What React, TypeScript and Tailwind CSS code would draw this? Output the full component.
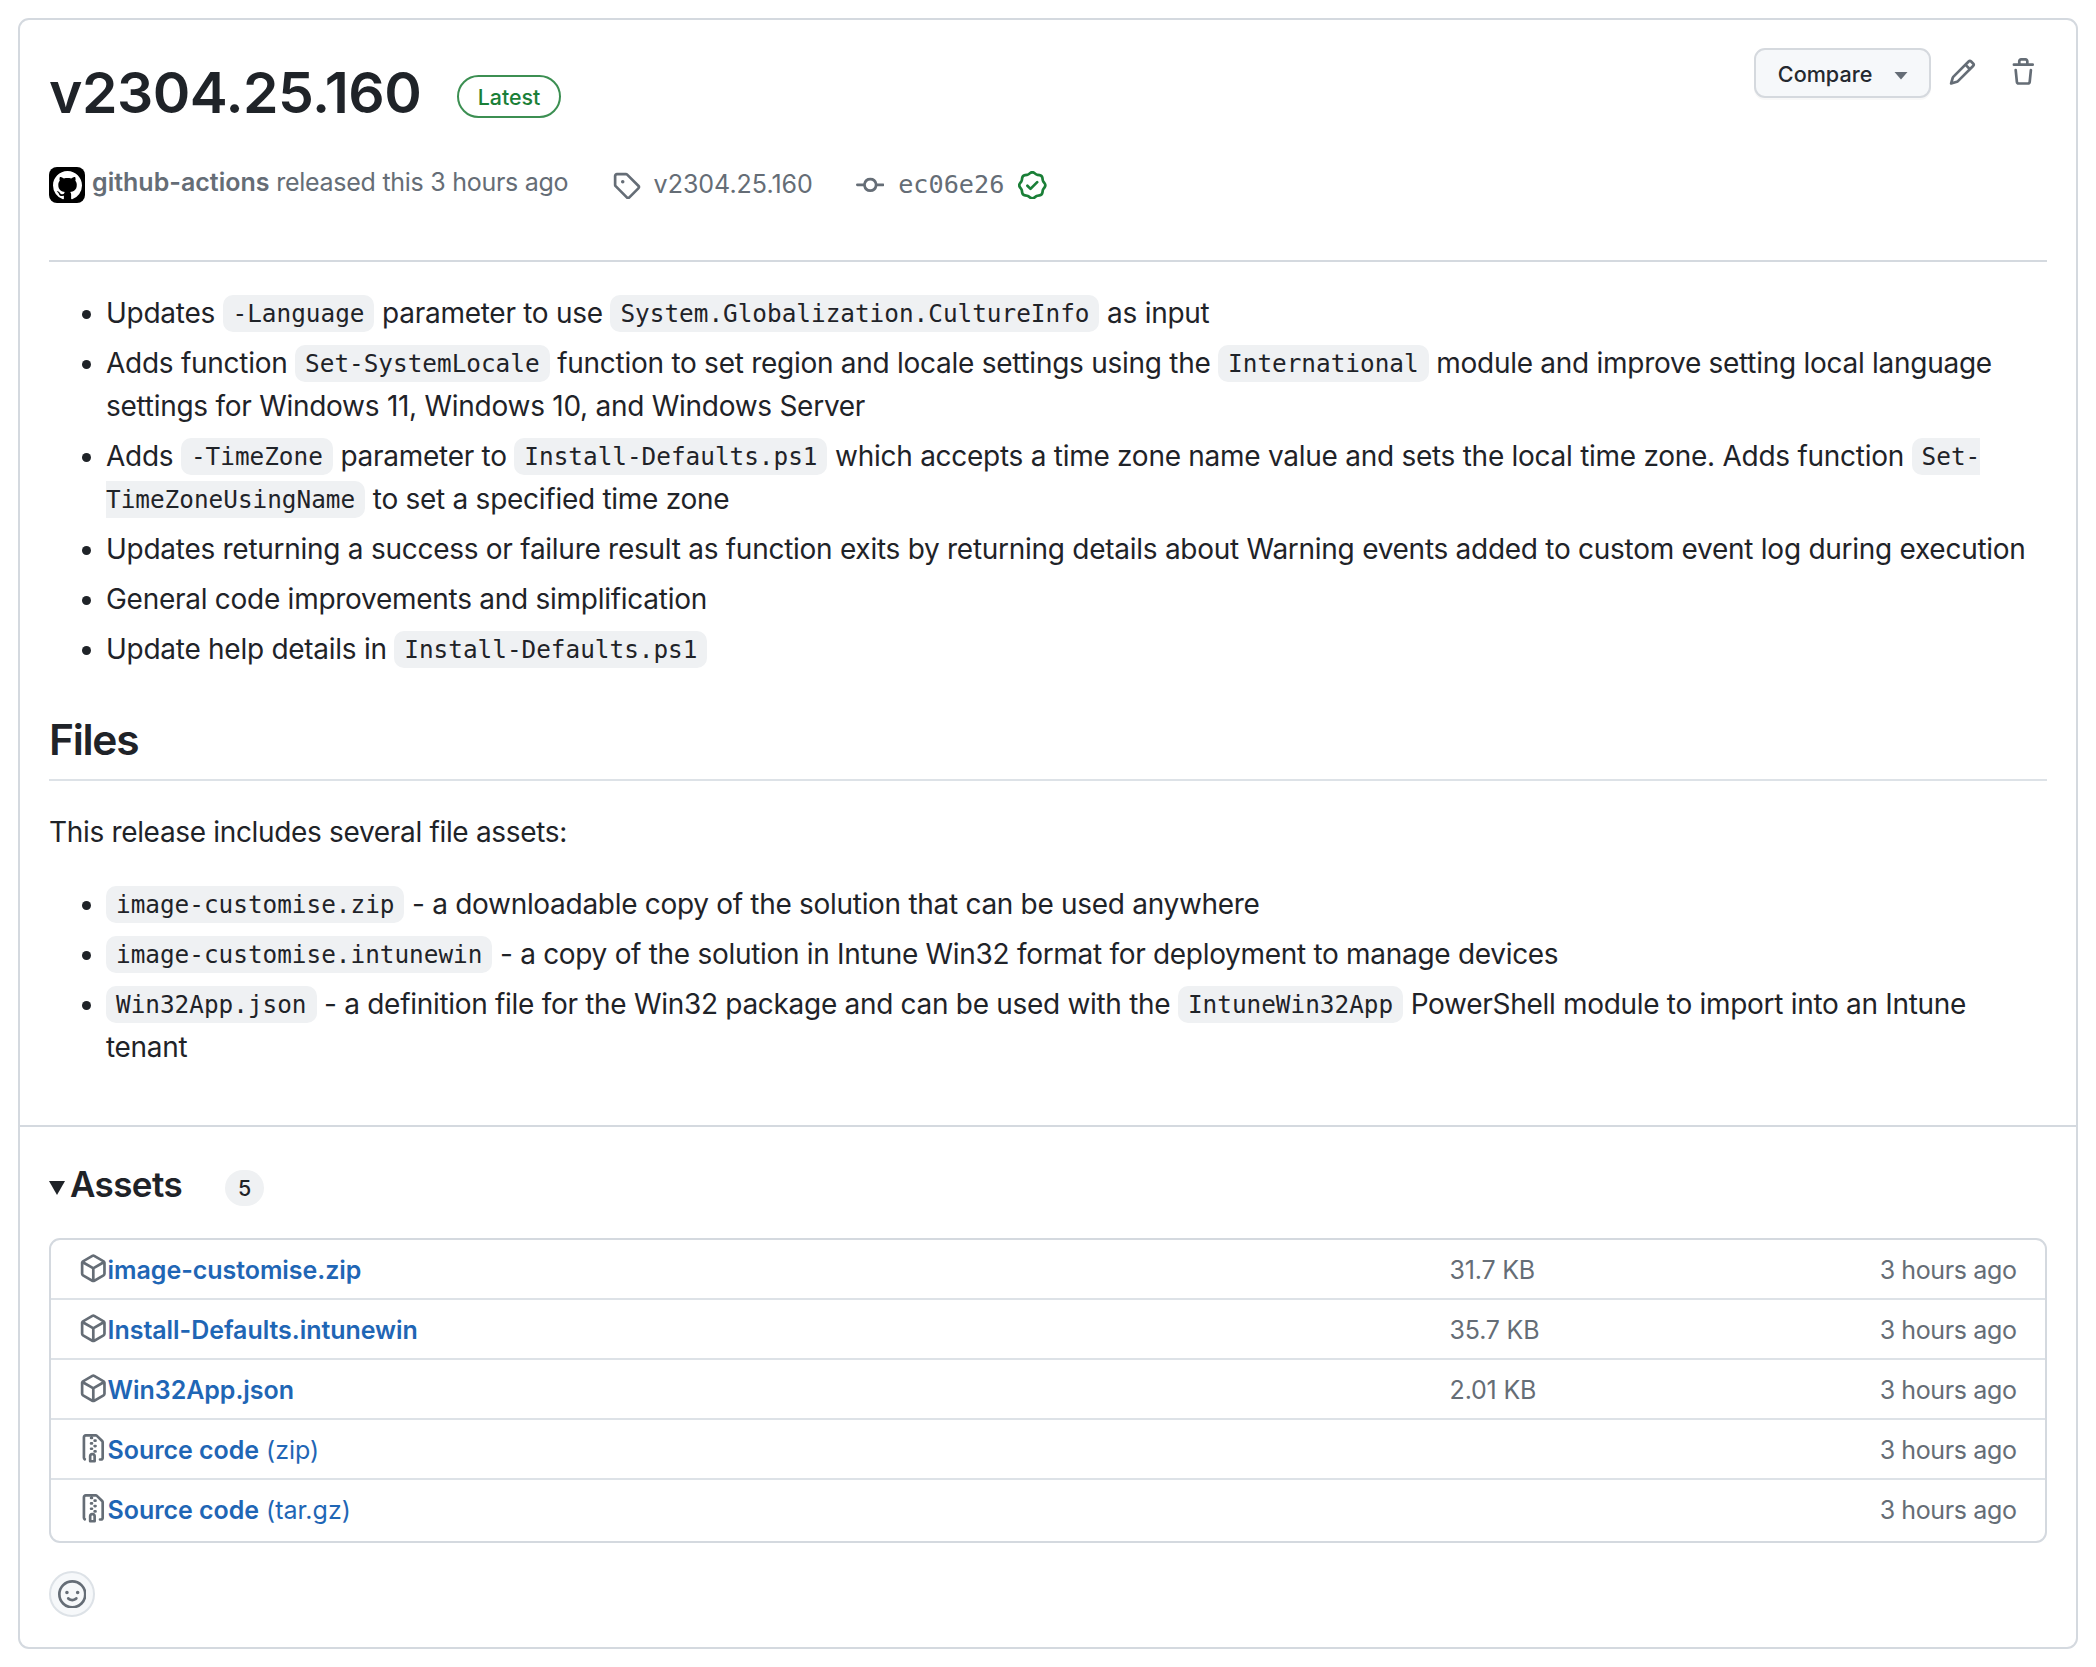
import type { ReactNode } from "react";

const paths = {
  github:
    "M8 0c4.42 0 8 3.58 8 8a8.013 8.013 0 0 1-5.45 7.59c-.4.08-.55-.17-.55-.38 0-.27.01-1.13.01-2.2 0-.75-.25-1.23-.54-1.48 1.78-.2 3.65-.88 3.65-3.95 0-.88-.31-1.59-.82-2.15.08-.2.36-1.02-.08-2.12 0 0-.67-.22-2.2.82-.64-.18-1.32-.27-2-.27-.68 0-1.36.09-2 .27-1.53-1.03-2.2-.82-2.2-.82-.44 1.1-.16 1.92-.08 2.12-.51.56-.82 1.28-.82 2.15 0 3.06 1.86 3.75 3.64 3.95-.23.2-.44.55-.51 1.07-.46.21-1.61.55-2.33-.66-.15-.24-.6-.83-1.23-.82-.67.01-.27.38.01.53.34.19.73.9.82 1.13.16.45.68 1.31 2.69.94 0 .67.01 1.3.01 1.49 0 .21-.15.45-.55.38A7.995 7.995 0 0 1 0 8c0-4.42 3.58-8 8-8Z",
  tag: "M1 7.775V2.75C1 1.784 1.784 1 2.75 1h5.025c.464 0 .91.184 1.238.513l6.25 6.25a1.75 1.75 0 0 1 0 2.474l-5.026 5.026a1.75 1.75 0 0 1-2.474 0l-6.25-6.25A1.752 1.752 0 0 1 1 7.775Zm1.5 0c0 .066.026.13.073.177l6.25 6.25a.25.25 0 0 0 .354 0l5.025-5.025a.25.25 0 0 0 0-.354l-6.25-6.25a.25.25 0 0 0-.177-.073H2.75a.25.25 0 0 0-.25.25ZM6 5a1 1 0 1 1 0 2 1 1 0 0 1 0-2Z",
  commit:
    "M11.93 8.5a4.002 4.002 0 0 1-7.86 0H.75a.75.75 0 0 1 0-1.5h3.32a4.002 4.002 0 0 1 7.86 0h3.32a.75.75 0 0 1 0 1.5Zm-1.43-.75a2.5 2.5 0 1 0-5 0 2.5 2.5 0 0 0 5 0Z",
  verified:
    "m9.585.52.929.68c.153.112.331.186.518.215l1.138.175a2.678 2.678 0 0 1 2.24 2.24l.174 1.139c.029.187.103.365.215.518l.68.928a2.677 2.677 0 0 1 0 3.17l-.68.928a1.174 1.174 0 0 0-.215.518l-.175 1.138a2.678 2.678 0 0 1-2.241 2.241l-1.138.175a1.17 1.17 0 0 0-.518.215l-.928.68a2.677 2.677 0 0 1-3.17 0l-.928-.68a1.174 1.174 0 0 0-.518-.215L3.83 14.41a2.678 2.678 0 0 1-2.24-2.24l-.175-1.138a1.17 1.17 0 0 0-.215-.518l-.68-.928a2.677 2.677 0 0 1 0-3.17l.68-.928c.112-.153.186-.331.215-.518l.175-1.14a2.678 2.678 0 0 1 2.24-2.24l1.139-.175c.187-.029.365-.103.518-.215l.928-.68a2.677 2.677 0 0 1 3.17 0ZM7.303 1.728l-.927.68a2.67 2.67 0 0 1-1.18.489l-1.137.174a1.179 1.179 0 0 0-.987.987l-.174 1.136a2.677 2.677 0 0 1-.489 1.18l-.68.928a1.18 1.18 0 0 0 0 1.394l.68.927c.256.348.424.753.489 1.18l.174 1.137c.078.509.478.909.987.987l1.136.174a2.67 2.67 0 0 1 1.18.489l.928.68c.414.305.979.305 1.394 0l.927-.68a2.67 2.67 0 0 1 1.18-.489l1.137-.174a1.18 1.18 0 0 0 .987-.987l.174-1.136a2.67 2.67 0 0 1 .489-1.18l.68-.928a1.176 1.176 0 0 0 0-1.394l-.68-.927a2.686 2.686 0 0 1-.489-1.18l-.174-1.137a1.179 1.179 0 0 0-.987-.987l-1.136-.174a2.677 2.677 0 0 1-1.18-.489l-.928-.68a1.176 1.176 0 0 0-1.394 0ZM11.28 6.78l-3.75 3.75a.75.75 0 0 1-1.06 0L4.72 8.78a.751.751 0 0 1 .018-1.042.751.751 0 0 1 1.042-.018L7 8.94l3.22-3.22a.751.751 0 0 1 1.042.018.751.751 0 0 1 .018 1.042Z",
  pencil:
    "M11.013 1.427a1.75 1.75 0 0 1 2.474 0l1.086 1.086a1.75 1.75 0 0 1 0 2.474l-8.61 8.61c-.21.21-.47.364-.756.445l-3.251.93a.75.75 0 0 1-.927-.928l.929-3.25c.081-.286.235-.547.445-.758l8.61-8.61Zm.176 4.823L9.75 4.81l-6.286 6.287a.253.253 0 0 0-.064.108l-.558 1.953 1.953-.558a.253.253 0 0 0 .108-.064Zm1.238-3.763a.25.25 0 0 0-.354 0L10.811 3.75l1.439 1.44 1.263-1.263a.25.25 0 0 0 0-.354Z",
  trash:
    "M11 1.75V3h2.25a.75.75 0 0 1 0 1.5H2.75a.75.75 0 0 1 0-1.5H5V1.75C5 .784 5.784 0 6.75 0h2.5C10.216 0 11 .784 11 1.75ZM4.496 6.675l.66 6.6a.25.25 0 0 0 .249.225h5.19a.25.25 0 0 0 .249-.225l.66-6.6a.75.75 0 0 1 1.492.149l-.66 6.6A1.748 1.748 0 0 1 10.595 15h-5.19a1.75 1.75 0 0 1-1.741-1.575l-.66-6.6a.75.75 0 1 1 1.492-.15ZM6.5 1.75V3h3V1.75a.25.25 0 0 0-.25-.25h-2.5a.25.25 0 0 0-.25.25Z",
  box: "m8.878.392 5.25 3.045c.54.314.872.89.872 1.514v6.098a1.75 1.75 0 0 1-.872 1.514l-5.25 3.045a1.75 1.75 0 0 1-1.756 0l-5.25-3.045A1.75 1.75 0 0 1 1 11.049V4.951c0-.624.332-1.201.872-1.514L7.122.392a1.75 1.75 0 0 1 1.756 0ZM7.875 1.69l-4.63 2.685L8 7.133l4.755-2.758-4.63-2.685a.248.248 0 0 0-.25 0ZM2.5 5.677v5.372c0 .09.047.171.125.216l4.625 2.683V8.432Zm6.25 8.271 4.625-2.683a.25.25 0 0 0 .125-.216V5.677L8.75 8.432Z",
  zip: "M3.5 1.75v11.5c0 .09.048.173.126.217a.75.75 0 0 1-.752 1.298A1.748 1.748 0 0 1 2 13.25V1.75C2 .784 2.784 0 3.75 0h5.586c.464 0 .909.185 1.237.513l2.914 2.914c.329.328.513.773.513 1.237v8.586A1.75 1.75 0 0 1 12.25 15h-.5a.75.75 0 0 1 0-1.5h.5a.25.25 0 0 0 .25-.25V4.664a.25.25 0 0 0-.073-.177L9.513 1.573a.25.25 0 0 0-.177-.073H7.25a.75.75 0 0 1 0 1.5h-.5a.75.75 0 0 1 0-1.5h-3a.25.25 0 0 0-.25.25Zm3.75 8.75h.5c.966 0 1.75.784 1.75 1.75v3a.75.75 0 0 1-.75.75h-2.5a.75.75 0 0 1-.75-.75v-3c0-.966.784-1.75 1.75-1.75ZM6 5.25a.75.75 0 0 1 .75-.75h.5a.75.75 0 0 1 0 1.5h-.5A.75.75 0 0 1 6 5.25Zm.75 2.25h.5a.75.75 0 0 1 0 1.5h-.5a.75.75 0 0 1 0-1.5ZM8 6.75A.75.75 0 0 1 8.75 6h.5a.75.75 0 0 1 0 1.5h-.5A.75.75 0 0 1 8 6.75ZM8.75 3h.5a.75.75 0 0 1 0 1.5h-.5a.75.75 0 0 1 0-1.5ZM8 9.75A.75.75 0 0 1 8.75 9h.5a.75.75 0 0 1 0 1.5h-.5A.75.75 0 0 1 8 9.75Zm-1 2.5v2.25h1v-2.25a.25.25 0 0 0-.25-.25h-.5a.25.25 0 0 0-.25.25Z",
  smiley:
    "M8 0a8 8 0 1 1 0 16A8 8 0 0 1 8 0ZM1.5 8a6.5 6.5 0 1 0 13 0 6.5 6.5 0 0 0-13 0Zm3.82 1.636a.75.75 0 0 1 1.038.175l.007.009c.103.118.22.222.35.31.264.178.683.37 1.285.37.602 0 1.02-.192 1.285-.371.13-.088.247-.192.35-.31l.007-.008a.75.75 0 0 1 1.222.87l-.614-.431c.614.43.614.431.613.431v.001l-.001.002-.002.003-.005.007-.014.019a2.066 2.066 0 0 1-.184.213c-.16.166-.338.316-.53.445-.63.418-1.37.638-2.127.629-.946 0-1.652-.308-2.126-.63a3.331 3.331 0 0 1-.715-.657l-.014-.02-.005-.006-.002-.003v-.002h-.001l.613-.432-.614.43a.75.75 0 0 1 .183-1.044ZM12 7a1 1 0 1 1-2 0 1 1 0 0 1 2 0ZM5 8a1 1 0 1 1 0-2 1 1 0 0 1 0 2Z",
};

function Icon({ name, className }: { name: keyof typeof paths; className: string }) {
  return (
    <svg viewBox="0 0 16 16" fill="currentColor" className={"block shrink-0 " + className} aria-hidden="true">
      <path d={paths[name]} />
    </svg>
  );
}

function Code({ children }: { children: ReactNode }) {
  return (
    <code className="rounded-[10px] bg-[#eff1f3] px-[10px] py-[4px] align-[1px] font-['DejaVu_Sans_Mono',monospace] text-[24.35px] leading-none tracking-normal">
      {children}
    </code>
  );
}

function Item({ children }: { children: ReactNode }) {
  return (
    <li className="flex">
      <span className="mt-[18px] mr-[15px] ml-[33px] size-[9px] shrink-0 rounded-full bg-[#1f2328]" />
      <div className="whitespace-nowrap">{children}</div>
    </li>
  );
}

const assets: { icon: "box" | "zip"; name: string; kind?: string; size: string }[] = [
  { icon: "box", name: "image-customise.zip", size: "31.7 KB" },
  { icon: "box", name: "Install-Defaults.intunewin", size: "35.7 KB" },
  { icon: "box", name: "Win32App.json", size: "2.01 KB" },
  { icon: "zip", name: "Source code", kind: "(zip)", size: "" },
  { icon: "zip", name: "Source code", kind: "(tar.gz)", size: "" },
];

export default function App() {
  return (
    <div className="h-[1667px] w-[2096px] overflow-hidden bg-white pt-[18px] pl-[18px] font-['Inter',sans-serif] text-[#1f2328]">
      <main className="h-[1631px] w-[2060px] rounded-[11px] border-2 border-[#d4d9df]">
        <header className="mx-[29px] flex h-[242px] justify-between border-b-2 border-[#d4d9df]">
          <div>
            <div className="mt-[37px] flex items-start">
              <h1 className="h-[72px] w-[408px] text-[57px] leading-[72px] font-semibold tracking-[-0.5px] whitespace-nowrap">
                v2304.25.160
              </h1>
              <span className="mt-[18px] flex h-[43px] w-[104px] items-center justify-center rounded-full border-2 border-[#3c8f52] pt-[2px] text-[21.4px] font-medium text-[#1a7f37]">
                Latest
              </span>
            </div>
            <div className="mt-[34px] flex h-[44px] items-center text-[25px] whitespace-nowrap text-[#656d76]">
              <span className="flex size-[36px] items-center justify-center rounded-[8px] bg-black">
                <Icon name="github" className="size-[29px] text-white" />
              </span>
              <span className="mb-[4px] ml-[7px] w-[521px] tracking-[-0.27px]">
                <b className="font-semibold tracking-normal">github-actions</b> released this 3 hours ago
              </span>
              <Icon name="tag" className="-ml-px size-[28.6px]" />
              <span className="ml-[13px] w-[202px]">v2304.25.160</span>
              <Icon name="commit" className="size-[28.6px]" />
              <span className="ml-[14px] w-[120px] font-['DejaVu_Sans_Mono',monospace] text-[25.2px]">ec06e26</span>
              <Icon name="verified" className="size-[28.6px] text-[#1a7f37]" />
            </div>
          </div>
          <div className="mt-[28px] flex text-[#656d76]">
            <button className="flex h-[50px] w-[177px] items-center rounded-[11px] border-2 border-[#d5d9de] bg-[#f6f8fa] pl-[22px] font-medium text-[#24292f] shadow-[0_2px_0_rgba(31,35,40,0.03)]">
              <span className="w-[94px] pt-[2px] text-left text-[21.6px]">Compare</span>
              <svg viewBox="0 0 14 8" className="mt-[6px] ml-[22px] h-[8px] w-[14px]" aria-hidden="true">
                <path d="M0.5 0h13L7 7.5Z" fill="#656d76" />
              </svg>
            </button>
            <Icon name="pencil" className="mt-[10px] ml-[17px] size-[28.6px]" />
            <Icon name="trash" className="mt-[10px] mr-[9px] ml-[33px] size-[28.6px]" />
          </div>
        </header>

        <section className="mx-[29px] h-[863px] pt-[30px] text-[28px] leading-[43px] tracking-[-0.27px]">
          <ul className="flex flex-col gap-[7px]">
            <Item>
              Updates <Code>-Language</Code> parameter to use <Code>System.Globalization.CultureInfo</Code> as input
            </Item>
            <Item>
              Adds function <Code>Set-SystemLocale</Code> function to set region and locale settings using the{" "}
              <Code>International</Code> module and improve setting local language
              <br />
              settings for Windows 11, Windows 10, and Windows Server
            </Item>
            <Item>
              Adds <Code>-TimeZone</Code> parameter to <Code>Install-Defaults.ps1</Code> which accepts a time zone name
              value and sets the local time zone. Adds function{" "}
              <Code>
                Set-
                <br />
                TimeZoneUsingName
              </Code>{" "}
              to set a specified time zone
            </Item>
            <Item>
              Updates returning a success or failure result as function exits by returning details about Warning events
              added to custom event log during execution
            </Item>
            <Item>General code improvements and simplification</Item>
            <Item>
              Update help details in <Code>Install-Defaults.ps1</Code>
            </Item>
          </ul>
          <h2 className="mt-[42px] h-[68px] border-b-2 border-[#dde2e7] text-[42.5px] leading-[54px] font-semibold tracking-[-1.3px]">
            Files
          </h2>
          <p className="mt-[30px] tracking-[-0.33px]">This release includes several file assets:</p>
          <ul className="mt-[29px] flex flex-col gap-[7px] tracking-[-0.3px]">
            <Item>
              <Code>image-customise.zip</Code> - a downloadable copy of the solution that can be used anywhere
            </Item>
            <Item>
              <Code>image-customise.intunewin</Code> - a copy of the solution in Intune Win32 format for deployment to
              manage devices
            </Item>
            <Item>
              <Code>Win32App.json</Code> - a definition file for the Win32 package and can be used with the{" "}
              <Code>IntuneWin32App</Code> PowerShell module to import into an Intune
              <br />
              tenant
            </Item>
          </ul>
        </section>

        <footer className="border-t-2 border-[#d4d9df] px-[29px] pt-[35px]">
          <div className="flex h-[50px] items-center">
            <svg viewBox="0 0 16 14" className="mt-[2px] h-[14px] w-[16px]" aria-hidden="true">
              <path d="M0 0h16L8 14Z" fill="#1f2328" />
            </svg>
            <h3 className="mb-[7px] ml-[5px] w-[155px] text-[35px] leading-[44px] font-semibold tracking-[-0.6px]">
              Assets
            </h3>
            <span className="mt-[2px] flex h-[36px] w-[39px] items-center justify-center rounded-full bg-[#eff1f3] text-[21.4px] font-medium">
              5
            </span>
          </div>
          <ul className="mt-[26px] rounded-[11px] border-2 border-[#d4d9df] text-[25px] text-[#656d76]">
            {assets.map((a, i) => (
              <li
                key={i}
                className="flex h-[60px] items-center border-b-2 border-[#dde2e7] pr-[28.5px] pl-[28px] whitespace-nowrap last:h-[61px] last:border-b-0 last:pb-[3px]"
              >
                <Icon name={a.icon} className="mb-px size-[28.6px]" />
                <span className="w-[1342px] pt-[4px] text-[#1f66b5]">
                  <b className="font-semibold tracking-[-0.05px]">{a.name}</b> {a.kind}
                </span>
                <span className="pt-[4px] tracking-[-0.2px]">{a.size}</span>
                <span className="ml-auto pt-[4px] tracking-[-0.38px]">3 hours ago</span>
              </li>
            ))}
          </ul>
          <button className="mt-[28px] flex size-[46px] items-center justify-center rounded-full border-2 border-[#dde2e7] bg-[#f6f8fa] text-[#656d76]">
            <Icon name="smiley" className="size-[28.6px]" />
          </button>
        </footer>
      </main>
    </div>
  );
}
